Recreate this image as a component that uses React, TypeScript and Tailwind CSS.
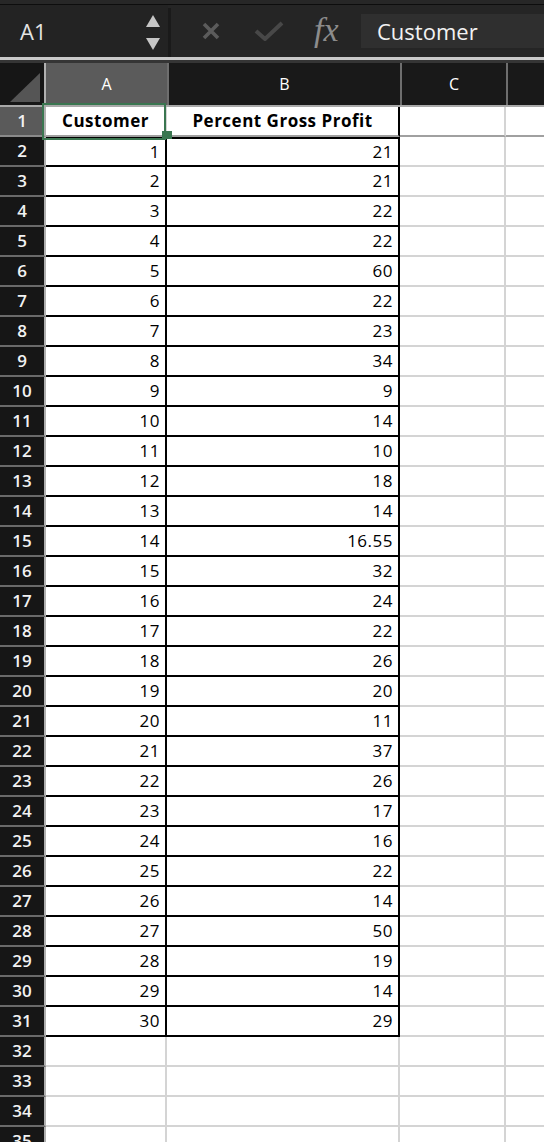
import React from "react";

const bVals: (number | string)[] = [21, 21, 22, 22, 60, 22, 23, 34, 9, 14, 10, 18, 14, "16.55", 32, 24, 22, 26, 20, 11, 37, 26, 17, 16, 22, 14, 50, 19, 14, 29];

function FormulaBar() {
  return (
    <div className="flex flex-col">
      <div className="h-[4px] bg-[#272727]" />
      <div className="h-[1px] bg-[#0d0d0d]" />
      <div className="flex h-[52px] bg-[#252525]">
        <div className="flex w-[168px] items-center justify-between bg-[#232323] pl-[20px] pr-[8px]">
          <span className="text-[22px] leading-none text-[#e4e4e4]">A1</span>
          <div className="flex flex-col gap-[11px] pt-[2px]">
            <svg width="14" height="12" viewBox="0 0 14 12">
              <polygon points="7,0 14,12 0,12" fill="#c6c6c6" />
            </svg>
            <svg width="14" height="12" viewBox="0 0 14 12">
              <polygon points="0,0 14,0 7,12" fill="#c6c6c6" />
            </svg>
          </div>
        </div>
        <div className="mt-[3px] w-[3px] bg-[#1a1a1a]" />
        <div className="ml-[31px] flex items-center">
          <svg width="18" height="18" viewBox="0 0 18 18">
            <path d="M2 2 L16 16 M16 2 L2 16" stroke="#5b5b5b" strokeWidth="3.6" strokeLinecap="butt" />
          </svg>
        </div>
        <div className="ml-[34px] flex items-center">
          <svg width="30" height="20" viewBox="0 0 30 20">
            <path d="M2 10 L11 18 L28 2" stroke="#484848" strokeWidth="4" fill="none" />
          </svg>
        </div>
        <div className="ml-[30px] flex w-[28px] items-center pb-[2px]">
          <span className="font-['Liberation_Serif',serif] text-[34px] italic leading-none text-[#8c8c8c]">fx</span>
        </div>
        <div className="ml-[19px] my-[9px] flex flex-1 items-center bg-[#2f2f2f] pl-[16px]">
          <span className="text-[22px] leading-none text-[#f2f2f2]">Customer</span>
        </div>
      </div>
      <div className="h-[3px] bg-[#c9c9c9]" />
      <div className="h-[3px] bg-[#353535]" />
    </div>
  );
}

function HeaderRow() {
  return (
    <div className="flex h-[44px] border-b-2 border-b-[#a9a9a9]">
      <div className="relative w-[46px] shrink-0 border-r-2 border-r-[#b0b0b0] bg-[#161616]">
        <svg className="absolute left-0 top-0" width="44" height="42" viewBox="0 0 44 42">
          <polygon points="10,39 40,39 40,10" fill="#555555" />
        </svg>
      </div>
      <div className="flex w-[121px] shrink-0 items-center justify-center bg-[#5b5b5b] text-[16px] font-medium text-white">A</div>
      <div className="flex w-[233px] shrink-0 items-center justify-center border-l-2 border-l-[#6e6e6e] bg-[#191919] text-[16px] font-medium text-white">B</div>
      <div className="flex w-[106px] shrink-0 items-center justify-center border-l-2 border-l-[#6e6e6e] bg-[#191919] text-[16px] font-medium text-white">C</div>
      <div className="flex-1 border-l-2 border-l-[#6e6e6e] bg-[#191919]" />
    </div>
  );
}

function DataRow({ r }: { r: number }) {
  const isData = r >= 2 && r <= 31;
  const isHead = r === 1;
  const bottomGrey = isHead ? "border-b-[#a0a0a0]" : "border-b-[#d4d4d4]";
  const aVal = isData ? String(r - 1) : isHead ? "Customer" : "";
  const bVal = isData ? String(bVals[r - 2]) : isHead ? "Percent Gross Profit" : "";
  const abBottom = isData ? "border-b-black" : bottomGrey;
  const aRight = isData ? "border-r-black" : "border-r-[#d4d4d4]";
  const bRight = isData || isHead ? "border-r-black" : "border-r-[#d4d4d4]";
  const topBlack = r === 2 ? "border-t-2 border-t-black" : "";
  const align = isHead ? "justify-center font-bold" : "justify-end pr-[5px]";
  return (
    <div className="flex h-[30px]">
      <div
        className={
          "flex w-[46px] shrink-0 items-center justify-center border-b-2 border-r-2 border-r-[#b0b0b0] text-[17px] font-semibold text-[#f2f2f2] " +
          (isHead ? "bg-[#5a5a5a] border-b-[#8a8a8a]" : "bg-[#161616] border-b-[#6a6a6a]")
        }
      >
        {r}
      </div>
      <div className={`flex w-[121px] shrink-0 items-center border-b-2 border-r-2 bg-white text-[17px] tracking-[0.5px] text-black ${abBottom} ${aRight} ${topBlack} ${align}`}>
        {aVal}
      </div>
      <div className={`flex w-[233px] shrink-0 items-center border-b-2 border-r-2 bg-white text-[17px] tracking-[0.5px] text-black ${abBottom} ${bRight} ${topBlack} ${align}`}>
        {bVal}
      </div>
      <div className={`w-[106px] shrink-0 border-b-2 border-r-2 border-r-[#d4d4d4] bg-white ${bottomGrey}`} />
      <div className={`flex-1 border-b-2 bg-white ${bottomGrey}`} />
    </div>
  );
}

export default function App() {
  const rows = Array.from({ length: 35 }, (_, i) => i + 1);
  return (
    <div className="relative h-[1142px] w-[544px] overflow-hidden bg-white font-['Open_Sans',sans-serif]">
      <FormulaBar />
      <HeaderRow />
      {rows.map((r) => (
        <DataRow key={r} r={r} />
      ))}
      <div className="pointer-events-none absolute left-[42px] top-[103px] h-[37px] w-[124px] border-[2.5px] border-[#3a7650]" />
      <div className="pointer-events-none absolute left-[162px] top-[131px] h-[8px] w-[10px] bg-[#3a7650]" />
    </div>
  );
}
